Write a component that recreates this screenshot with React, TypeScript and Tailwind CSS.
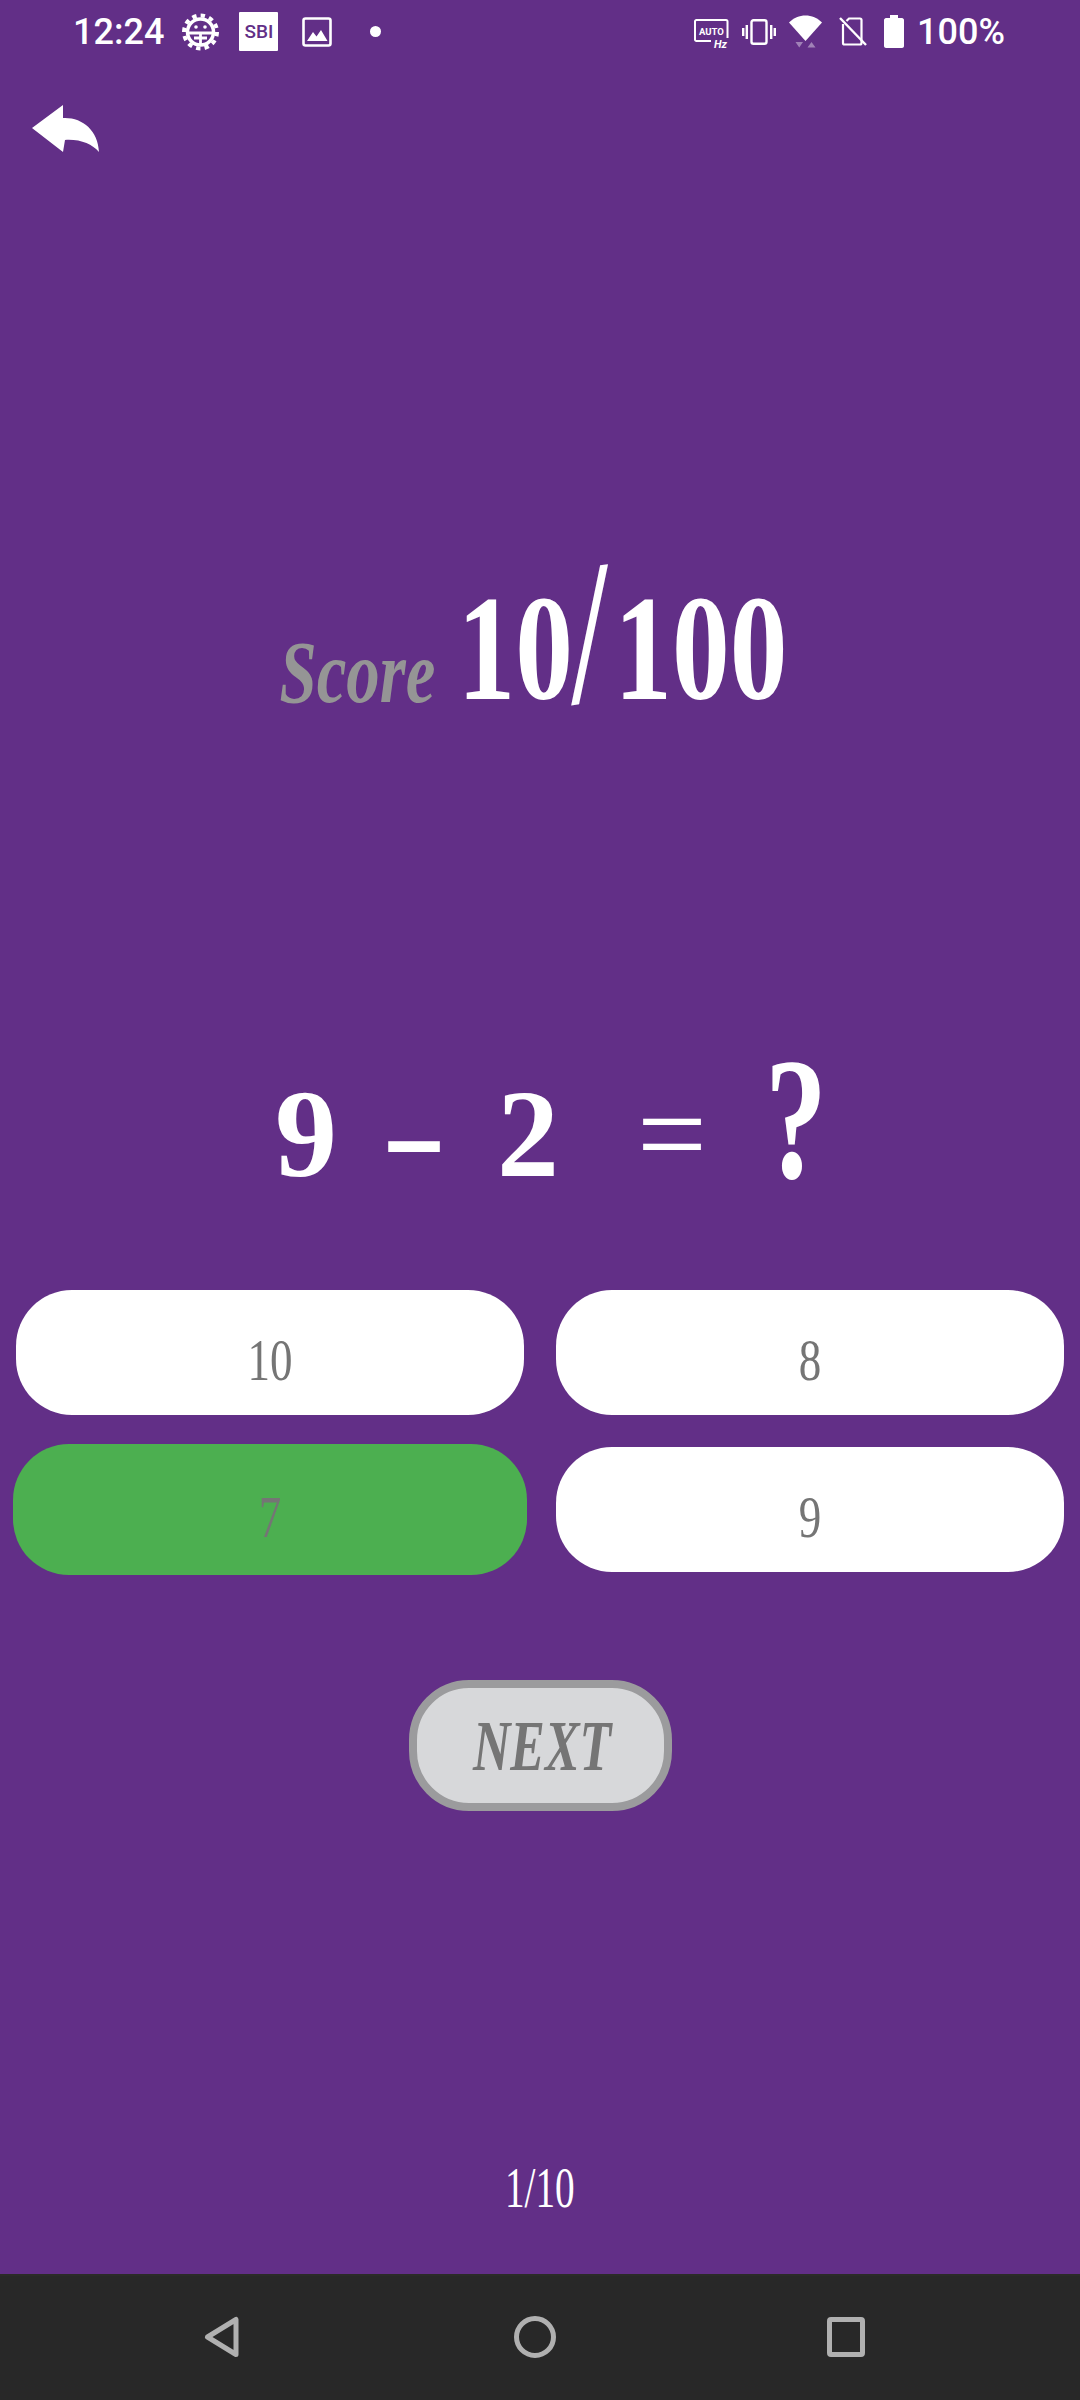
const script = "font-['Liberation_Serif',serif] italic"
const numerals = "font-['Liberation_Serif',serif] not-italic"

function GearIcon() {
  return (
    <svg width="37" height="38" viewBox="0 0 37 38" fill="none" stroke="white" className="ml-[18px]">
      <circle cx="18.5" cy="19" r="16.5" strokeWidth="4" strokeDasharray="4.4 4.2" />
      <circle cx="18.5" cy="19" r="13" strokeWidth="3.5" />
      <path d="M6 20H31M18.5 20V31M12 25H25" strokeWidth="2.800" />
      <circle cx="14" cy="14" r="1.800" fill="white" stroke="none" />
      <circle cx="23" cy="14" r="1.800" fill="white" stroke="none" />
    </svg>
  )
}

function PictureIcon() {
  return (
    <svg width="30" height="30" viewBox="0 0 30 30" fill="none" className="ml-[24px]">
      <rect x="1.5" y="1.5" width="27" height="27" rx="2" stroke="white" strokeWidth="2.6" />
      <path d="M5 24L11 15L14.500 19.500L19 13L25.500 24Z" fill="white" />
    </svg>
  )
}

function AutoHzIcon() {
  return (
    <svg width="36" height="38" viewBox="0 -6 36 38" fill="none">
      <path d="M17 22H2.500C1.600 22 1 21.400 1 20.500V2.500C1 1.600 1.600 1 2.500 1H32C33 1 33.500 1.600 33.500 2.500V19" stroke="white" strokeWidth="2" />
      <text x="5" y="15.500" fill="white" fontSize="9.500" fontWeight="700" fontFamily="Roboto, sans-serif">AUTO</text>
      <text x="20" y="28.500" fill="white" fontSize="11" fontStyle="italic" fontWeight="700" fontFamily="Roboto, sans-serif">Hz</text>
    </svg>
  )
}

function VibrateIcon() {
  return (
    <svg width="34" height="26" viewBox="0 0 34 26" fill="none" className="ml-[12px]">
      <rect x="9.500" y="1.200" width="15" height="23.600" rx="2" stroke="white" strokeWidth="2.400" />
      <path d="M4.800 6V20M1.200 9V17M29.200 6V20M32.800 9V17" stroke="white" strokeWidth="2.400" />
    </svg>
  )
}

function WifiIcon() {
  return (
    <svg width="33" height="33" viewBox="0 0 33 33" fill="none" className="ml-[13px]">
      <path d="M0 7.500C9 -2 24 -2 33 7.500L16.500 26Z" fill="white" />
      <path d="M6.500 27H14L10.250 32.500ZM22.500 27L26.500 32.500H18.500Z" fill="white" fillOpacity="0.4" />
    </svg>
  )
}

function NoSimIcon() {
  return (
    <svg width="28" height="29" viewBox="0 0 28 29" fill="none" className="ml-[17px]">
      <path d="M4 7V26C4 27 4.500 27.500 5.500 27.500H21C22 27.500 22.500 27 22.500 26V3C22.500 2 22 1.500 21 1.500H10L7.500 4" stroke="white" strokeWidth="2.200" />
      <path d="M1 1L27 28" stroke="white" strokeWidth="2.400" />
    </svg>
  )
}

function BatteryIcon() {
  return (
    <svg width="20" height="33" viewBox="0 0 20 33" className="ml-[17px]">
      <path d="M6 0H14V3H18C19 3 20 4 20 5V31C20 32 19 33 18 33H2C1 33 0 32 0 31V5C0 4 1 3 2 3H6Z" fill="white" />
    </svg>
  )
}

function StatusBar() {
  return (
    <div className="flex h-[63px] items-center justify-between pl-[73px] pr-[75px] font-['Roboto',sans-serif] text-[36px] font-medium leading-none text-white">
      <div className="flex items-center">
        <span>12:24</span>
        <GearIcon />
        <div className="ml-[20px] flex h-[39px] w-[39px] items-center justify-center rounded-[1px] bg-white text-[19px] font-medium text-[#622f87]">SBI</div>
        <PictureIcon />
        <div className="ml-[38px] h-[11px] w-[11px] rounded-full bg-white" />
      </div>
      <div className="flex items-center">
        <AutoHzIcon />
        <VibrateIcon />
        <WifiIcon />
        <NoSimIcon />
        <BatteryIcon />
        <span className="ml-[13px]">100%</span>
      </div>
    </div>
  )
}

function ScoreRow() {
  return (
    <div className="mt-[403px] flex h-[160px] items-end pl-[287px]">
      <span className={`flex w-[141px] scale-x-[0.76] justify-center text-[88px] font-bold leading-[84px] text-[#959595] ${script}`}>Score</span>
      <span className={`ml-[28px] flex w-[333px] scale-x-[0.77] justify-center text-[150px] font-bold leading-[134px] text-white ${numerals}`}>
        <span>10</span>
        <span className="mx-[6px] origin-[50%_85%] -rotate-[6deg] scale-y-[1.35] italic">/</span>
        <span>100</span>
      </span>
    </div>
  )
}

function Equation() {
  return (
    <div className={`mt-[336px] flex h-[146px] items-end pl-[254px] text-[124px] font-bold leading-[124px] text-white ${numerals}`}>
      <span className="w-[104px] text-center">9</span>
      <span className="w-[112px] scale-x-[1.6] text-center">-</span>
      <span className="w-[116px] text-center">2</span>
      <span className="w-[172px] text-center font-normal">=</span>
      <span className="w-[76px] origin-bottom translate-y-[10px] scale-y-[1.4] text-center">?</span>
    </div>
  )
}

function Answer({ label, correct }: { label: string; correct?: boolean }) {
  return (
    <div
      className={`flex items-center justify-center pt-[14px] text-[60px] leading-none text-[#757575] ${numerals} ${
        correct ? 'h-[131px] w-[514px] rounded-[56px] bg-[#4caf50]' : 'h-[125px] w-[508px] rounded-[56px] bg-white'
      }`}
    >
      <span className="scale-x-75">{label}</span>
    </div>
  )
}

function NavBar() {
  return (
    <div className="mt-auto flex h-[126px] items-center justify-between border-t-2 border-[#2b2b28] bg-[#282828] pb-[2px] pl-[204px] pr-[215px]">
      <svg width="36" height="42" viewBox="0 0 36 42" fill="none" stroke="#b0b0b0" strokeWidth="5" strokeLinejoin="round">
        <path d="M32 3.500V38.500L3.500 21Z" />
      </svg>
      <svg width="42" height="42" viewBox="0 0 42 42" fill="none" stroke="#b0b0b0" strokeWidth="5" className="ml-[3px]">
        <circle cx="21" cy="21" r="18.500" />
      </svg>
      <svg width="38" height="40" viewBox="0 0 38 40" fill="none" stroke="#b0b0b0" strokeWidth="5" strokeLinejoin="round">
        <rect x="2.500" y="2.500" width="33" height="35" rx="1.500" />
      </svg>
    </div>
  )
}

export default function App() {
  return (
    <div className="flex h-[2400px] w-[1080px] flex-col overflow-hidden bg-[#622f87]">
      <StatusBar />
      {/* back arrow */}
      <svg width="67" height="47" viewBox="0 0 67 47" className="ml-[32px] mt-[42px] shrink-0">
        <path d="M0 23L31 0V13C50 12 66 25 67 47C60 39 48 34 33 35L31 47Z" fill="white" />
      </svg>
      <ScoreRow />
      <Equation />

      <div className="mt-[93px] flex justify-between px-[16px]">
        <Answer label="10" />
        <Answer label="8" />
      </div>
      <div className="mt-[29px] flex items-center justify-between pl-[13px] pr-[16px]">
        <Answer label="7" correct />
        <Answer label="9" />
      </div>

      <div className="mt-[105px] flex justify-center">
        <div className={`flex h-[131px] w-[263px] items-center justify-center rounded-[60px] border-[8px] border-[#9b9b9d] bg-[#d7d8da] pl-[4px] text-[72px] font-bold leading-none text-[#757575] ${script}`}>
          <span className="scale-x-[0.72]">NEXT</span>
        </div>
      </div>

      <div className={`mt-[347px] text-center text-[56px] leading-[60px] text-white ${numerals}`}>
        <span className="inline-block scale-x-[0.7]">1/10</span>
      </div>

      <NavBar />
    </div>
  )
}
